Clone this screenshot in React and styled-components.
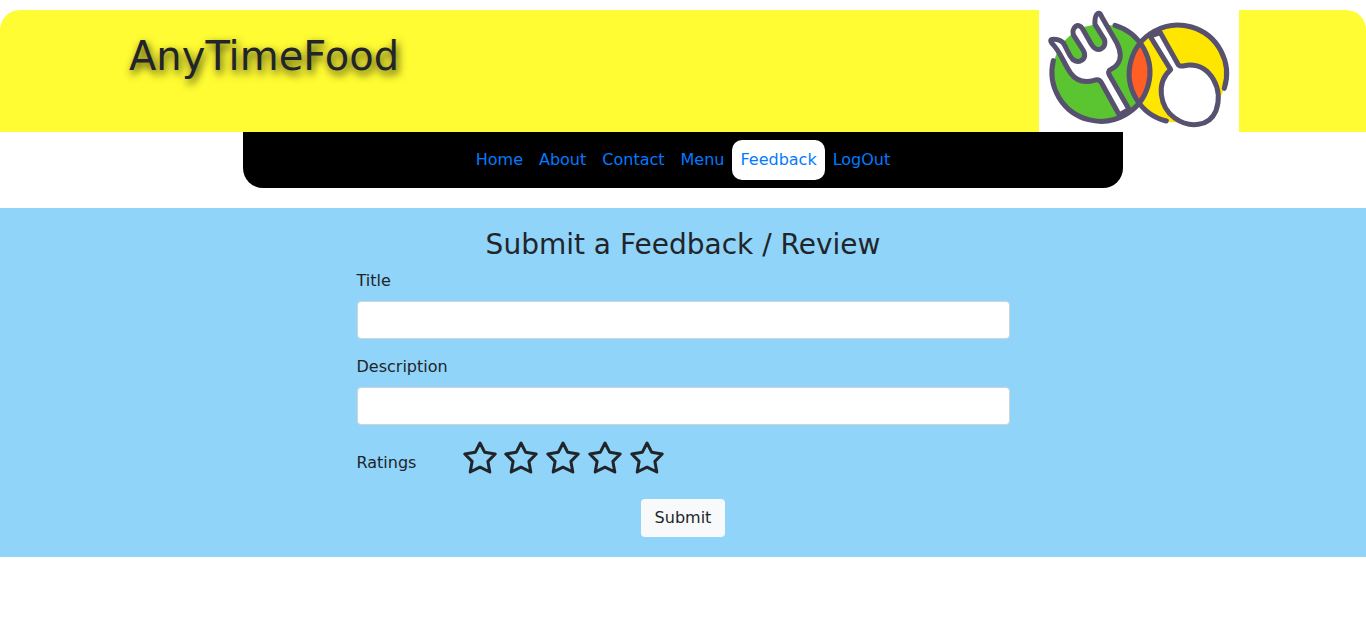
import React from "react";
import styled, { createGlobalStyle } from "styled-components";

const GlobalStyle = createGlobalStyle`
  *, *::before, *::after { box-sizing: border-box; }
  body {
    margin: 0;
    background: #fff;
    color: #212529;
    font-family: Verdana, "DejaVu Sans", sans-serif;
    font-size: 16px;
    line-height: 24px;
  }
`;

const Header = styled.header`
  display: flex;
  justify-content: space-between;
  align-items: flex-start;
  margin-top: 10px;
  padding: 0 127px 0 129px;
  background: #fffc33;
  border-radius: 20px 20px 0 0;
`;

const Brand = styled.h1`
  margin: 22px 0 0;
  font-size: 40px;
  font-weight: 400;
  line-height: 48px;
  text-shadow: 2px 4px 8px rgba(0, 0, 0, 0.8);
`;

const Logo = styled.svg`
  display: block;
  width: 200px;
  height: 122px;
  background: #fff;
`;

const Nav = styled.nav`
  display: flex;
  justify-content: center;
  width: calc(100% - 486px);
  min-width: 460px;
  margin: 0 auto 20px;
  padding: 8px;
  background: #000;
  border-radius: 0 0 20px 20px;
`;

const NavLink = styled.a`
  padding: 8px;
  border-radius: 10px;
  color: #007bff;
  text-decoration: none;
  background: ${(p) => (p.$active ? "#fff" : "transparent")};
`;

const Panel = styled.main`
  padding: 20px 0;
  background: #90d4f9;
`;

const Form = styled.form`
  display: flex;
  flex-direction: column;
  width: 50%;
  min-width: 320px;
  margin: 0 auto;
  padding: 0 15px;
`;

const Heading = styled.h2`
  margin: 0 0 7px;
  font-size: 28px;
  font-weight: 400;
  line-height: 34px;
  text-align: center;
`;

const Field = styled.div`
  display: flex;
  flex-direction: column;
  gap: 8px;
  margin-bottom: 16px;
`;

const TextInput = styled.input`
  width: 100%;
  height: 38px;
  padding: 6px 12px;
  border: 1px solid #ced4da;
  border-radius: 4px;
  background: #fff;
  color: #495057;
  font: inherit;
`;

const RatingRow = styled.fieldset`
  display: flex;
  align-items: flex-start;
  margin: 0 0 24px;
  padding: 0;
  border: 0;
`;

const RatingLabel = styled.span`
  width: 106px;
  padding-top: 10px;
`;

const Stars = styled.div`
  display: flex;
  justify-content: space-between;
  width: 201px;
`;

const StarButton = styled.button`
  display: block;
  padding: 0;
  border: 0;
  background: none;
  color: inherit;
  cursor: pointer;
`;

const StarIcon = styled.svg`
  display: block;
  width: 34px;
  height: 34px;
`;

const Submit = styled.button`
  align-self: center;
  height: 38px;
  padding: 6px 14px;
  border: 0;
  border-radius: 4px;
  background: #f8f9fa;
  color: #212529;
  font: inherit;
  cursor: pointer;
`;

const links = ["Home", "About", "Contact", "Menu", "Feedback", "LogOut"];

function FoodLogo() {
  return (
    <Logo viewBox="27 30 600 366" role="img" aria-label="Fork and spoon">
      <defs>
        <clipPath id="plate">
          <circle cx="213" cy="218" r="145" />
        </clipPath>
      </defs>
      <circle cx="213" cy="218" r="145" fill="#5ac531" />
      <circle cx="443" cy="221" r="146" fill="#ffe600" />
      <circle cx="443" cy="221" r="146" fill="#ff5f25" clipPath="url(#plate)" />
      <g fill="none" stroke="#57506f" strokeWidth="15" strokeLinecap="round" strokeLinejoin="round">
        <path
          fill="#fff"
          d="M268 345L216 251Q208 235 192 241C160 250 137 240 121 218C101 189 91 154 65 129Q58 118 69 118Q94 117 103 134C113 151 116 166 129 179C149 193 171 177 161 153L131 106C122 82 147 65 158 87L184 133C200 161 232 147 223 118L195 73Q193 48 204 40Q211 38 215 50L261 130C279 167 271 194 243 208Q232 213 238 225L297 328Z"
        />
        <path
          fill="#fff"
          d="M360 108L422 209C376 250 390 322 434 354C479 386 538 380 558 332C581 266 541 195 479 195C462 195 451 204 444 193L391 98Z"
        />
        <path d="M255 76A147 147 0 1 1 70 182" />
        <path d="M583 265A146 146 0 1 0 409 363" />
      </g>
    </Logo>
  );
}

function Star() {
  return (
    <StarIcon viewBox="0 0 34 34" aria-hidden="true">
      <path
        d="M17 2L21.6 11.2L32.2 13L24.9 20.4L26.8 31L17 26.2L7.2 31L9.1 20.4L1.8 13L12.4 11.2Z"
        fill="none"
        stroke="currentColor"
        strokeWidth="3"
        strokeLinejoin="round"
      />
    </StarIcon>
  );
}

export default function App() {
  return (
    <>
      <GlobalStyle />
      <Header>
        <Brand>AnyTimeFood</Brand>
        <FoodLogo />
      </Header>
      <Nav>
        {links.map((name) => (
          <NavLink key={name} href={`#${name.toLowerCase()}`} $active={name === "Feedback"}>
            {name}
          </NavLink>
        ))}
      </Nav>
      <Panel>
        <Form onSubmit={(e) => e.preventDefault()}>
          <Heading>Submit a Feedback / Review</Heading>
          <Field>
            <label htmlFor="title">Title</label>
            <TextInput id="title" type="text" />
          </Field>
          <Field>
            <label htmlFor="description">Description</label>
            <TextInput id="description" type="text" />
          </Field>
          <RatingRow aria-labelledby="ratings">
            <RatingLabel id="ratings">Ratings</RatingLabel>
            <Stars>
              {[1, 2, 3, 4, 5].map((n) => (
                <StarButton key={n} type="button" aria-label={`${n} of 5`}>
                  <Star />
                </StarButton>
              ))}
            </Stars>
          </RatingRow>
          <Submit type="submit">Submit</Submit>
        </Form>
      </Panel>
    </>
  );
}
